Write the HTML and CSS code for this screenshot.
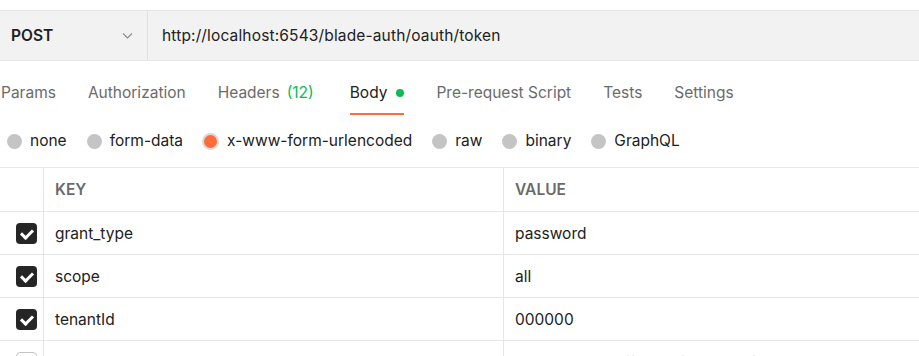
FILE: index.html
```html
<!DOCTYPE html>
<html lang="en">

<head>
    <meta charset="UTF-8">
    <meta name="viewport" content="width=device-width, initial-scale=1.0">
    <title>Request</title>
    <link rel="stylesheet" href="styles.css">
</head>

<body>
    <div class="urlbar">
        <div class="method">
            <span>POST</span>
            <svg class="chevron" width="11" height="6" viewBox="0 0 11 6">
                <path d="M1 0.5 L5.5 5 L10 0.5" fill="none" stroke="#8a8a8a" stroke-width="1.1"/>
            </svg>
        </div>
        <div class="url">http://localhost:6543/blade-auth/oauth/token</div>
    </div>

    <nav class="tabs">
        <span class="tab">Params</span>
        <span class="tab">Authorization</span>
        <span class="tab">Headers <span class="count">(12)</span></span>
        <span class="tab active">Body <i class="dot"></i></span>
        <span class="tab">Pre-request Script</span>
        <span class="tab">Tests</span>
        <span class="tab">Settings</span>
    </nav>

    <div class="modes">
        <label class="mode"><i class="radio"></i>none</label>
        <label class="mode"><i class="radio"></i>form-data</label>
        <label class="mode"><i class="radio on"></i>x-www-form-urlencoded</label>
        <label class="mode"><i class="radio"></i>raw</label>
        <label class="mode"><i class="radio"></i>binary</label>
        <label class="mode"><i class="radio"></i>GraphQL</label>
    </div>

    <div class="table">
        <div class="row head">
            <div class="cell check"></div>
            <div class="cell">KEY</div>
            <div class="cell">VALUE</div>
        </div>
        <div class="row">
            <div class="cell check"><i class="box"></i></div>
            <div class="cell">grant_type</div>
            <div class="cell">password</div>
        </div>
        <div class="row">
            <div class="cell check"><i class="box"></i></div>
            <div class="cell">scope</div>
            <div class="cell">all</div>
        </div>
        <div class="row">
            <div class="cell check"><i class="box"></i></div>
            <div class="cell">tenantId</div>
            <div class="cell">000000</div>
        </div>
        <div class="row off">
            <div class="cell check"><i class="box"></i></div>
            <div class="cell">password</div>
            <div class="cell">987F0cc03b1dff84a21f6b77483fd7d1</div>
        </div>
    </div>
</body>

</html>
```

FILE: styles.css
```css
body {
    margin: 0;
    font-family: Inter, "Noto Sans", sans-serif;
    font-size: 15.5px;
    color: #212121;
    background: #fff;
    overflow: hidden;
}

.urlbar {
    margin-top: 10px;
    height: 49px;
    display: flex;
    align-items: center;
    background: #f2f2f2;
    border-top: 1px solid #e6e6e6;
    border-bottom: 1px solid #e6e6e6;
}

.method {
    width: 136px;
    height: 100%;
    padding-left: 11px;
    display: flex;
    align-items: center;
    justify-content: space-between;
    border-right: 1px solid #e0e0e0;
    font-weight: 600;
}

.chevron {
    margin-right: 14px;
}

.url {
    padding-left: 14px;
    letter-spacing: 0.15px;
}

.tabs {
    display: flex;
    gap: 32px;
    padding: 23px 0 0 1px;
}

.tab {
    line-height: 18px;
    padding-bottom: 11px;
    border-bottom: 2px solid transparent;
    color: #6b6b6b;
    display: flex;
    align-items: center;
}

.tab.active {
    color: #212121;
    border-bottom-color: #ff6c37;
    margin-left: 4px;
}

.count {
    color: #0cbb52;
    margin-left: 7px;
}

.dot {
    width: 8px;
    height: 8px;
    border-radius: 50%;
    background: #0cbb52;
    margin-left: 9px;
}

.modes {
    display: flex;
    gap: 20px;
    padding: 17px 0 17px 7px;
}

.mode {
    display: flex;
    align-items: center;
    gap: 8px;
    line-height: 18px;
}

.radio {
    width: 15px;
    height: 15px;
    border-radius: 50%;
    background: #c4c4c4;
}

.radio.on {
    width: 13px;
    height: 13px;
    background: #ff6c37;
    border: 2px solid #d9d9d9;
    margin-left: -1px;
}

.table {
    border-top: 1px solid #e6e6e6;
}

.row {
    display: grid;
    grid-template-columns: 44px 460px 1fr;
    height: 42px;
    border-bottom: 1px solid #e6e6e6;
}

.row.head {
    height: 43px;
    font-weight: 600;
    color: #6b6b6b;
}

.cell {
    display: flex;
    align-items: center;
    padding-left: 11px;
    border-right: 1px solid #e6e6e6;
}

.cell:last-child {
    border-right: none;
}

.cell.check {
    padding-left: 16px;
}

.box {
    width: 21px;
    height: 21px;
    border-radius: 4px;
    background: #262626;
    position: relative;
}

.box::after {
    content: "";
    position: absolute;
    left: 7px;
    top: 4px;
    width: 5px;
    height: 9px;
    border: solid #fff;
    border-width: 0 3px 3px 0;
    transform: rotate(45deg);
}

.row.off {
    color: #a6a6a6;
}

.row.off .box {
    background: #fff;
    border: 1px solid #c4c4c4;
    width: 19px;
    height: 19px;
}

.row.off .box::after {
    display: none;
}
```
